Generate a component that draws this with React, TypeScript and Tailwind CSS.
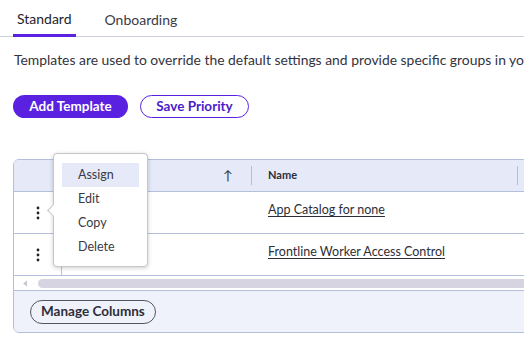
import React from "react";

const F = { fontFamily: "Lato, 'Noto Sans', sans-serif" };

function Kebab() {
  return (
    <svg width="4" height="14" viewBox="0 0 4 14">
      <circle cx="2" cy="2" r="1.4" fill="#222" />
      <circle cx="2" cy="7" r="1.4" fill="#222" />
      <circle cx="2" cy="12" r="1.4" fill="#222" />
    </svg>
  );
}

export default function App() {
  return (
    <div className="relative w-[524px] h-[344px] overflow-hidden bg-white text-[#2e2e38]" style={F}>
      {/* Tabs */}
      <div className="flex h-[37px] border-b border-[#ccd0d8] pl-[13px]">
        <div className="flex items-center px-[4px] border-b-[3px] border-[#5a22e0] -mb-px text-[14px] text-[#1e1e28] pt-[2px]">Standard</div>
        <div className="flex items-center px-[4px] ml-[25px] text-[14px] text-[#3a3a48] pt-[2px]">Onboarding</div>
      </div>
      {/* Description */}
      <div className="pl-[14px] mt-[13px] text-[13.9px] whitespace-nowrap text-[#33333d] leading-[20px]">
        Templates are used to override the default settings and provide specific groups in your organization
      </div>
      {/* Buttons */}
      <div className="flex gap-[12px] pl-[13px] mt-[25px]">
        <button className="h-[23px] w-[115px] rounded-full bg-[#5a22e0] text-white text-[13.5px] font-bold">Add Template</button>
        <button className="h-[23px] w-[109px] rounded-full border border-[#5a22e0] text-[#4a1ec8] text-[13.5px] font-bold">Save Priority</button>
      </div>
      {/* Table card */}
      <div className="ml-[13px] mt-[41px] w-[620px] border border-[#b4bfdc] rounded-l-[6px] overflow-hidden">
        <div className="flex h-[32px] bg-[#e5e9f8] border-b border-[#b4bfdc] items-center text-[11px] font-bold text-[#2e2e38]">
          <div className="w-[48px]" />
          <div className="w-[190px] h-full flex items-center justify-end pr-[19px] relative">
            <span className="text-[13px] font-normal text-[#333]">↑</span>
            <div className="absolute right-0 top-[6px] bottom-[6px] w-px bg-[#b4bfdc]" />
          </div>
          <div className="w-[266px] h-full flex items-center pl-[16px] relative">
            Name
            <div className="absolute right-0 top-[6px] bottom-[6px] w-px bg-[#b4bfdc]" />
          </div>
        </div>
        {["App Catalog for none", "Frontline Worker Access Control"].map((t, i) => (
          <div key={i} className="flex h-[42px] border-b border-[#b4bfdc] items-center text-[12.5px]">
            <div className="w-[48px] h-full flex items-center justify-center border-r border-[#b4bfdc]">
              <Kebab />
            </div>
            <div className="w-[190px]" />
            <div className="pl-[16px] pb-[4px] underline underline-offset-2 text-[#2e2e38]">{t}</div>
          </div>
        ))}
        {/* Scrollbar */}
        <div className="flex items-center h-[15px] border-b border-[#b4bfdc] bg-white">
          <svg width="24" height="15" viewBox="0 0 24 15">
            <path d="M9 7.5 L13 4.5 L13 10.5 Z" fill="#c8c8d0" />
          </svg>
          <div className="flex-1 h-[9px] rounded-full bg-[#d6d4e0]" />
        </div>
        {/* Footer */}
        <div className="h-[41px] bg-[#eff2fb] flex items-center pl-[16px]">
          <button className="h-[24px] px-[10px] rounded-full border border-[#55555f] text-[13.5px] font-bold text-[#2e2e38]">Manage Columns</button>
        </div>
      </div>
      {/* Popup menu */}
      <div className="absolute left-[53px] top-[153px] w-[95px] h-[114px] bg-white border border-[#c6c6cc] rounded-[4px] shadow-[0_1px_4px_rgba(0,0,0,0.2)] pt-[9px] px-[8px] text-[12.5px] text-[#3a3a44]">
        <div className="absolute -left-[5px] top-[52px] w-[9px] h-[9px] bg-white border-l border-b border-[#c6c6cc] rotate-45" />
        {["Assign", "Edit", "Copy", "Delete"].map((m, i) => (
          <div key={m} className={`h-[24px] flex items-center pl-[16px] ${i === 0 ? "bg-[#e5e9f8]" : ""}`}>{m}</div>
        ))}
      </div>
    </div>
  );
}
